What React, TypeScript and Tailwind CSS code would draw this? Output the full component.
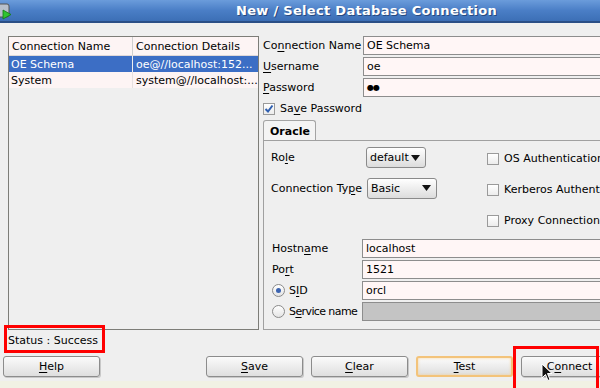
import React from 'react';

// underline a single mnemonic letter inside a label
function Mn({ text, at }: { text: string; at: number }) {
  return (
    <span>
      {text.slice(0, at)}
      <span className="underline underline-offset-2">{text[at]}</span>
      {text.slice(at + 1)}
    </span>
  );
}

function TextBox({ value, disabled }: { value?: React.ReactNode; disabled?: boolean }) {
  return (
    <div
      className={`h-[19px] w-[260px] shrink-0 border border-[#8d8d8d] px-[3px] flex items-center ${
        disabled ? 'bg-[#c4c4c4]' : 'bg-[#fff6f6]'
      }`}
    >
      {value}
    </div>
  );
}

function Dropdown({ value, width }: { value: string; width: string }) {
  return (
    <div
      className={`${width} h-[21px] rounded-[3px] border border-[#8a8a8a] bg-gradient-to-b from-white to-[#dcdcdc] flex items-center justify-between pl-[3px] pr-[5px]`}
    >
      <span>{value}</span>
      <svg width="9" height="6" viewBox="0 0 9 6">
        <path d="M0 0 H9 L4.5 6 Z" fill="#111" />
      </svg>
    </div>
  );
}

function Check({ checked }: { checked?: boolean }) {
  return (
    <div className="w-[12px] h-[12px] border border-[#9a9a9a] bg-gradient-to-b from-white to-[#ececec] flex items-center justify-center shrink-0">
      {checked && (
        <svg width="10" height="10" viewBox="0 0 10 10">
          <path d="M1.5 5 L4 7.5 L8.5 1.5" stroke="#2f5fb0" strokeWidth="2" fill="none" />
        </svg>
      )}
    </div>
  );
}

function Radio({ checked }: { checked?: boolean }) {
  return (
    <div className="w-[13px] h-[13px] rounded-full border border-[#8a8a8a] bg-gradient-to-b from-white to-[#e4e4e4] flex items-center justify-center shrink-0">
      {checked && <div className="w-[5px] h-[5px] rounded-full bg-[#3b63b0]" />}
    </div>
  );
}

function Button({ children, focused }: { children: React.ReactNode; focused?: boolean }) {
  return (
    <div
      className={`w-[97px] h-[21px] shrink-0 rounded-[3px] flex items-center justify-center bg-gradient-to-b from-[#fbfbfb] to-[#dedede] ${
        focused
          ? 'border-2 border-[#f3c37a] shadow-[inset_0_0_3px_#f6d49c]'
          : 'border border-[#8c8c8c] shadow-[1px_1px_0_#c8c8c8]'
      }`}
    >
      {children}
    </div>
  );
}

export default function App() {
  return (
    <div className="relative w-[600px] h-[388px] overflow-hidden bg-[#efefef] text-[11px] leading-none text-black font-['DejaVu_Sans',sans-serif]">
      {/* Title bar */}
      <div className="h-[23px] flex items-center bg-gradient-to-b from-[#6b9cdb] via-[#4a7ec6] to-[#3c6fb6] border-b-2 border-[#2b4f86]">
        <svg width="12" height="18" viewBox="0 0 12 18" className="shrink-0">
          <rect x="-4" y="2" width="13" height="13" rx="2" fill="#b8c0cc" stroke="#555" />
          <path d="M3 8 L11 12.5 L3 17 Z" fill="#2fc42f" stroke="#137a13" strokeWidth="0.8" />
        </svg>
        <span className="ml-[224px] text-[13px] font-bold text-white tracking-[0.3px] [text-shadow:1px_1px_0_#274a80]">
          New / Select Database Connection
        </span>
      </div>

      {/* Main area */}
      <div className="flex pt-[13px]">
        {/* Connections table */}
        <div className="ml-[8px] w-[251px] h-[294px] border border-[#7d7d78] shrink-0">
          <div className="flex h-[19px] bg-[#fdf4f4] border-b border-[#e0d8d8]">
            <div className="w-[124px] flex items-center pl-[3px] border-r border-[#cfcfcf]">Connection Name</div>
            <div className="flex-1 flex items-center pl-[3px]">Connection Details</div>
          </div>
          <div className="flex h-[16px] bg-[#3c6ec5] text-white">
            <div className="w-[124px] flex items-center pl-[2px] border-r border-[#eee]">OE Schema</div>
            <div className="flex-1 flex items-center pl-[3px] whitespace-nowrap overflow-hidden">oe@//localhost:152...</div>
          </div>
          <div className="flex h-[16px] bg-[#fdf4f4]">
            <div className="w-[124px] flex items-center pl-[2px] border-r border-[#e6e0e0]">System</div>
            <div className="flex-1 flex items-center pl-[3px] whitespace-nowrap overflow-hidden">system@//localhost:...</div>
          </div>
        </div>

        {/* Connection form */}
        <div className="ml-[4px] flex flex-col shrink-0">
          <div className="flex flex-col gap-[2px]">
            <div className="flex items-center">
              <span className="w-[100px]"><Mn text="Connection Name" at={2} /></span>
              <TextBox value="OE Schema" />
            </div>
            <div className="flex items-center">
              <span className="w-[100px]"><Mn text="Username" at={0} /></span>
              <TextBox value="oe" />
            </div>
            <div className="flex items-center">
              <span className="w-[100px]"><Mn text="Password" at={0} /></span>
              <TextBox value={<span className="text-[8px] tracking-[-1px]">●●</span>} />
            </div>
          </div>

          <div className="flex items-center gap-[5px] h-[17px] mt-[3px]">
            <Check checked />
            <Mn text="Save Password" at={2} />
          </div>

          {/* Tab */}
          <div className="mt-[3px] flex">
            <div className="w-[53px] h-[21px] border border-b-0 border-[#a4a4a4] rounded-t-[3px] bg-[#f4f4f4] flex items-center pl-[6px] font-bold">
              Oracle
            </div>
          </div>
          <div className="w-[380px] h-[190px] border border-[#a0a0a0] -mt-px pl-[7px]">
            <div className="flex">
              <div className="w-[216px] shrink-0 flex flex-col">
                <div className="h-[31px] flex items-center pt-[2px]">
                  <span className="w-[95px]"><Mn text="Role" at={2} /></span>
                  <Dropdown value="default" width="w-[60px]" />
                </div>
                <div className="h-[31px] flex items-center pt-[1px]">
                  <span className="w-[96px]"><Mn text="Connection Type" at={13} /></span>
                  <Dropdown value="Basic" width="w-[70px]" />
                </div>
              </div>
              <div className="flex flex-col pt-[2px] shrink-0 whitespace-nowrap">
                <div className="h-[31px] flex items-center gap-[5px]"><Check />OS Authentication</div>
                <div className="h-[31px] flex items-center gap-[5px]"><Check />Kerberos Authentication</div>
                <div className="h-[31px] flex items-center gap-[5px]"><Check />Proxy Connection</div>
              </div>
            </div>

            <div className="mt-[3px] pl-[1px] flex flex-col gap-[2px]">
              <div className="flex items-center">
                <span className="w-[90px]"><Mn text="Hostname" at={5} /></span>
                <TextBox value="localhost" />
              </div>
              <div className="flex items-center">
                <span className="w-[90px]"><Mn text="Port" at={2} /></span>
                <TextBox value="1521" />
              </div>
              <div className="flex items-center">
                <span className="w-[90px] flex items-center gap-[4px]"><Radio checked /><Mn text="SID" at={1} /></span>
                <TextBox value="orcl" />
              </div>
              <div className="flex items-center">
                <span className="w-[90px] flex items-center gap-[4px] whitespace-nowrap tracking-[-0.6px]"><Radio /><Mn text="Service name" at={1} /></span>
                <TextBox disabled />
              </div>
            </div>
          </div>
        </div>
      </div>

      {/* Status */}
      <div className="h-[20px] flex items-center pl-[8px]">Status : Success</div>

      {/* Buttons */}
      <div className="flex pl-[3px] mt-[6px]">
        <Button><Mn text="Help" at={0} /></Button>
        <div className="ml-[106px] flex gap-[8px]">
          <Button><Mn text="Save" at={0} /></Button>
          <Button><Mn text="Clear" at={0} /></Button>
          <Button focused><Mn text="Test" at={0} /></Button>
          <Button><Mn text="Connect" at={1} /></Button>
        </div>
      </div>
      <div className="mt-[4px] h-[10px] bg-[#f1f1e4]" />

      {/* Annotation boxes */}
      <div className="absolute left-[4px] top-[325px] w-[101px] h-[28px] border-[3px] border-[#ff0000]" />
      <div className="absolute left-[513px] top-[346px] w-[86px] h-[46px] border-[3px] border-[#ff0000]" />

      {/* Mouse cursor */}
      <svg className="absolute left-[541px] top-[363px]" width="12" height="19" viewBox="0 0 12 19">
        <path d="M1 1 L1 15 L4.5 11.5 L7 17.5 L9 16.5 L6.5 10.5 L11 10.5 Z" fill="#111" stroke="#fff" strokeWidth="1" />
      </svg>
    </div>
  );
}
